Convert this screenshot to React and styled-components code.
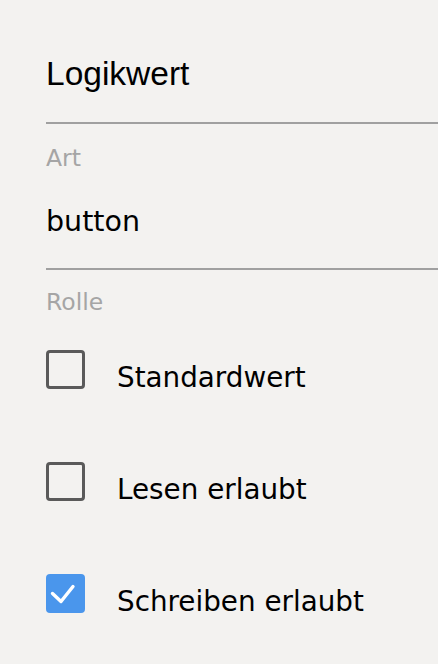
import React from "react";
import styled, { createGlobalStyle } from "styled-components";

const Global = createGlobalStyle`
  html, body { margin: 0; padding: 0; background: #f3f2f0; }
  body { font-family: "DejaVu Sans", "Noto Sans", sans-serif; }
`;

const Page = styled.div`
  width: 438px;
  height: 664px;
  overflow: hidden;
  padding: 54px 0 0 46px;
  box-sizing: border-box;
  display: flex;
  flex-direction: column;
`;

const Field = styled.div`
  display: flex;
  flex-direction: column;
  margin-top: ${(p) => p.$top || 0}px;
`;

const Label = styled.div`
  font-size: 23.5px;
  color: #a5a5a5;
  line-height: 28px;
  height: 28px;
`;

const Value = styled.div`
  font-family: ${(p) => (p.$heading ? '"Liberation Sans", Arial, sans-serif' : '"DejaVu Sans", sans-serif')};
  font-size: ${(p) => (p.$heading ? 33.5 : 28.5)}px;
  color: #000;
  line-height: 40px;
  padding-top: ${(p) => p.$top}px;
  padding-bottom: ${(p) => p.$bottom}px;
  border-bottom: 2px solid #a0a0a0;
`;

const CheckList = styled.div`
  display: flex;
  flex-direction: column;
  gap: 73px;
  margin-top: 34px;
`;

const CheckRow = styled.label`
  display: flex;
  align-items: flex-start;
  gap: 32px;
  height: 39px;
`;

const Box = styled.span`
  width: 39px;
  height: 39px;
  box-sizing: border-box;
  border-radius: 4px;
  flex: none;
  display: block;
  border: ${(p) => (p.$checked ? "none" : "3px solid #5a5a5a")};
  background: ${(p) => (p.$checked ? "#4a96ec" : "transparent")};
  svg { display: block; }
`;

const CheckText = styled.span`
  font-size: 27.8px;
  color: #000;
  line-height: 39px;
  padding-top: 8px;
  white-space: nowrap;
`;

function Check({ checked, children }) {
  return (
    <CheckRow>
      <Box $checked={checked}>
        {checked && (
          <svg width="39" height="39" viewBox="0 0 39 39" fill="none">
            <path d="M6.5 19.5l8.5 8L27 12.5" stroke="#fff" strokeWidth="3.4" strokeLinecap="round" strokeLinejoin="round" />
          </svg>
        )}
      </Box>
      <CheckText>{children}</CheckText>
    </CheckRow>
  );
}

export default function App() {
  return (
    <>
      <Global />
      <Page>
        <Field>
          <Value $heading $top={0} $bottom={28}>Logikwert</Value>
        </Field>
        <Field $top={20}>
          <Label>Art</Label>
          <Value $top={30} $bottom={26}>button</Value>
        </Field>
        <Field $top={18}>
          <Label>Rolle</Label>
          <CheckList>
            <Check>Standardwert</Check>
            <Check>Lesen erlaubt</Check>
            <Check checked>Schreiben erlaubt</Check>
          </CheckList>
        </Field>
      </Page>
    </>
  );
}
